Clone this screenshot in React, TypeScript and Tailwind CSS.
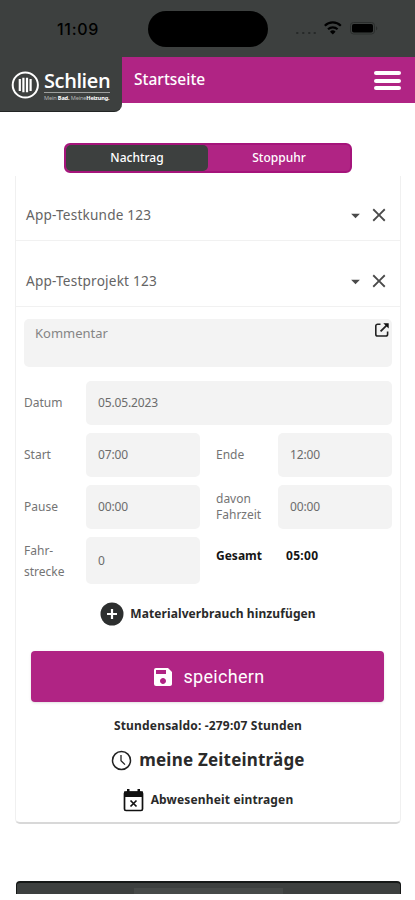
import React, { useState } from "react";
import { MdArrowDropDown, MdClose, MdSave } from "react-icons/md";

type SelectRowProps = {
  label: string;
  className: string;
};

type FieldProps = {
  label: React.ReactNode;
  value: string;
  className?: string;
};

function Logo() {
  return (
    <div className="z-10 flex h-[55px] w-[122px] shrink-0 rounded-br-lg border-b border-[#222524] bg-[#3d403f] pl-[11px] pt-[13px] text-white">
      <svg width="29" height="30" viewBox="0 0 29 30" fill="none">
        <circle cx="14.3" cy="15" r="12.6" stroke="#fff" strokeWidth="2" />
        <path
          d="M8.8 9v12M12.4 7.8v14.4M16 7.8v14.4M19.6 9v12"
          stroke="#fff"
          strokeWidth="2.2"
        />
      </svg>
      <div className="ml-[4px] flex w-[66px] flex-col">
        <span className="mt-px h-[19px] whitespace-nowrap font-['Open_Sans',sans-serif] text-[20px] font-semibold leading-[19px] tracking-[-0.4px]">
          Schlien
        </span>
        <span className="mt-[2px] h-px bg-white/50" />
        <span className="mt-px whitespace-nowrap text-[5.6px] leading-[8px] tracking-[-0.15px] text-white/60">
          Mein <b className="text-white">Bad.</b> Meine
          <b className="text-white">Heizung.</b>
        </span>
      </div>
    </div>
  );
}

function StatusBar() {
  return (
    <div className="flex h-[57px] items-start bg-[#3d403f] text-black">
      <span className="ml-[57px] mt-[19px] w-[91px] font-[Inter,sans-serif] text-[16px] font-medium leading-5 tracking-[0.7px]">
        11:09
      </span>
      <span className="mt-[11px] h-[36px] w-[120px] rounded-full bg-black" />
      <svg
        className="ml-[26px] mt-[19px]"
        width="86"
        height="18"
        viewBox="0 0 86 18"
        fill="none"
      >
        <g fill="#262928">
          <rect x="2" y="13" width="2.5" height="2" rx="1" />
          <rect x="8" y="13" width="2.5" height="2" rx="1" />
          <rect x="14" y="13" width="2.5" height="2" rx="1" />
          <rect x="19.5" y="13" width="2.5" height="2" rx="1" />
        </g>
        <path
          d="M30.8 6.7a11.5 11.5 0 0 1 16 0M34 10.2a7 7 0 0 1 9.6 0"
          stroke="#000"
          strokeWidth="2.2"
        />
        <path d="M36 12.7a4 4 0 0 1 5.6 0l-2.8 2.9z" fill="#000" />
        <rect
          x="56.5"
          y="3.5"
          width="24"
          height="11.5"
          rx="3"
          stroke="#2b2e2d"
        />
        <rect x="58" y="5" width="21" height="8.5" rx="1.8" fill="#000" />
        <path d="M82 7.3v4c1.8-.7 1.8-3.3 0-4z" fill="#2b2e2d" />
      </svg>
    </div>
  );
}

function SelectRow({ label, className }: SelectRowProps) {
  return (
    <div
      className={`flex items-center border-b border-[#f1f1f1] pl-[10px] pr-[10px] ${className}`}
    >
      <span className="flex-1 text-[13.6px] tracking-[0.2px] text-[#646464]">
        {label}
      </span>
      <MdArrowDropDown className="mr-[2px] h-[21px] w-[21px] text-[#4a4a4a]" />
      <MdClose className="h-[22px] w-[22px] text-[#4a4a4a]" />
    </div>
  );
}

function Field({ label, value, className = "h-[44px]" }: FieldProps) {
  return (
    <div className="flex flex-1 items-center">
      <span className="w-[62px] shrink-0 text-[12px] leading-4 text-[#747474]">
        {label}
      </span>
      <div
        className={`flex flex-1 items-center rounded-[5px] bg-[#f3f3f3] pl-3 text-[12px] tracking-[-0.15px] text-[#6c6c6c] ${className}`}
      >
        {value}
      </div>
    </div>
  );
}

export default function App() {
  const [tab, setTab] = useState("Nachtrag");

  return (
    <div className="h-[900px] w-[415px] overflow-hidden bg-white font-['Noto_Sans',sans-serif]">
      <StatusBar />

      <header className="flex h-[46px] items-start bg-[#b02484]">
        <Logo />
        <h1 className="ml-[12px] mt-[10px] flex-1 text-[15.5px] font-medium leading-6 text-white">
          Startseite
        </h1>
        <button
          type="button"
          aria-label="Menü"
          className="mr-[14px] mt-[14px] flex w-[27px] flex-col gap-[3.5px]"
        >
          <span className="h-[4px] rounded-sm bg-white" />
          <span className="h-[4px] rounded-sm bg-white" />
          <span className="h-[4px] rounded-sm bg-white" />
        </button>
      </header>

      <main className="pl-[15px] pr-[14px] pt-[40px]">
        <div className="ml-[49px] flex h-[30px] w-[288px] rounded-[6px] border-2 border-[#a5147b] bg-[#b02484]">
          {["Nachtrag", "Stoppuhr"].map((name) => (
            <button
              key={name}
              type="button"
              onClick={() => setTab(name)}
              className={`flex-1 rounded-[5px] text-[12px] font-medium leading-none text-white ${
                tab === name ? "bg-[#3d403f]" : ""
              }`}
            >
              {name}
            </button>
          ))}
        </div>

        <section className="mt-[3px] flex h-[648px] flex-col rounded-b-[5px] border-x border-b-2 border-[#f0f0f0] border-b-[#d8d8d8]">
          <SelectRow label="App-Testkunde 123" className="h-[65px] pt-[14px]" />
          <SelectRow
            label="App-Testprojekt 123"
            className="h-[66px] pt-[15px]"
          />

          <div className="mx-[8px] mt-[12px] flex h-[48px] justify-between rounded-[5px] bg-[#f3f3f3] pl-[11px] pr-[2px] pt-[3px] text-[13px] text-[#858585]">
            <span className="leading-[22px]">Kommentar</span>
            <svg width="16" height="16" viewBox="0 0 16 16" fill="none">
              <path
                d="M6.5 2.2H3.6a1.8 1.8 0 0 0-1.8 1.8v8.2A1.8 1.8 0 0 0 3.6 14h8.2a1.8 1.8 0 0 0 1.8-1.8V9.4"
                stroke="#222"
                strokeWidth="1.6"
              />
              <path d="M6.6 9.4l5.8-5.8" stroke="#222" strokeWidth="1.8" />
              <path d="M9.3 1.2h5.4v5.4z" fill="#111" />
            </svg>
          </div>

          <div className="mx-[8px] mt-[14px] flex flex-col gap-[8px]">
            <div className="flex">
              <Field label="Datum" value="05.05.2023" />
            </div>
            <div className="flex gap-[16px]">
              <Field label="Start" value="07:00" />
              <Field label="Ende" value="12:00" />
            </div>
            <div className="flex gap-[16px]">
              <Field label="Pause" value="00:00" />
              <Field
                label={
                  <>
                    davon
                    <br />
                    Fahrzeit
                  </>
                }
                value="00:00"
              />
            </div>
            <div className="flex gap-[16px]">
              <Field
                label={
                  <span className="block leading-[21px]">
                    Fahr-
                    <br />
                    strecke
                  </span>
                }
                value="0"
                className="h-[47px]"
              />
              <div className="flex flex-1 items-start pt-[9px] text-[12px] font-bold leading-5 text-[#151515]">
                <span className="w-[70px]">Gesamt</span>
                <span className="tracking-[0.3px]">05:00</span>
              </div>
            </div>
          </div>

          <div className="mt-[18px] flex h-[24px] items-center justify-center text-[12px] font-bold tracking-[0.1px] text-[#2a2a2a]">
            <svg
              className="mr-[6px]"
              width="24"
              height="24"
              viewBox="0 0 24 24"
              fill="none"
            >
              <circle cx="12" cy="12" r="11.5" fill="#2d2f2f" />
              <path d="M12 7v10M7 12h10" stroke="#fff" strokeWidth="2.2" />
            </svg>
            Materialverbrauch hinzufügen
          </div>

          <button
            type="button"
            className="ml-[15px] mr-[16px] mt-[25px] flex h-[51px] shrink-0 items-center justify-center rounded-[4px] bg-[#b02484] font-[Roboto,sans-serif] text-[18px] tracking-[0.3px] text-white shadow-sm"
          >
            <MdSave className="mr-[9px] h-[24px] w-[24px]" />
            speichern
          </button>

          <p className="mt-[14px] text-center text-[12px] font-bold leading-5 tracking-[0.18px] text-[#2a2a2a]">
            Stundensaldo: -279:07 Stunden
          </p>

          <div className="mt-[12px] flex h-[24px] items-center justify-center text-[17px] font-bold tracking-[0.2px] text-[#2a2a2a]">
            <svg
              className="mr-[7px]"
              width="21"
              height="21"
              viewBox="0 0 21 21"
              fill="none"
              stroke="#222"
            >
              <circle cx="10.5" cy="10.5" r="9" strokeWidth="1.5" />
              <path d="M10 5v5.8l4 3.8" strokeWidth="1.3" />
            </svg>
            meine Zeiteinträge
          </div>

          <div className="mt-[16px] flex h-[24px] items-center justify-center text-[12px] font-bold tracking-[0.15px] text-[#2a2a2a]">
            <svg
              className="mr-[7px]"
              width="21"
              height="24"
              viewBox="0 0 21 24"
              fill="none"
            >
              <rect
                x="1.5"
                y="4"
                width="18"
                height="18.5"
                rx="1.5"
                stroke="#111"
                strokeWidth="1.7"
              />
              <path
                d="M1 3.5h19V9H1zM4 1h2.5v3H4zM14.5 1H17v3h-2.5z"
                fill="#111"
              />
              <path
                d="M7.5 12.5l6 6M13.5 12.5l-6 6"
                stroke="#111"
                strokeWidth="1.7"
              />
            </svg>
            Abwesenheit eintragen
          </div>
        </section>

        <div className="ml-px mt-[57px] flex h-[13px] items-end justify-center rounded-t-[4px] border-x border-t-2 border-[#151817] bg-[#3d403f]">
          <span className="h-[6px] w-[149px] bg-[#474a49]" />
        </div>
      </main>
    </div>
  );
}
